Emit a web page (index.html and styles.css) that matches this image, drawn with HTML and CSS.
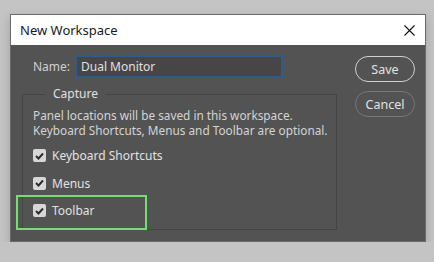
FILE: index.html
```html
<!DOCTYPE html>
<html lang="en">
<head>
    <meta charset="UTF-8">
    <title>New Workspace</title>
    <link rel="stylesheet" href="styles.css">
</head>
<body>
    <div class="dialog">
        <div class="title-bar">
            <span class="title">New Workspace</span>
            <svg class="close" width="11" height="11" viewBox="0 0 11 11">
                <path d="M0.5 0.5 L10.5 10.5 M10.5 0.5 L0.5 10.5" stroke="#111" stroke-width="1.1" fill="none"/>
            </svg>
        </div>
        <div class="dialog-body">
            <div class="main-col">
                <div class="name-row">
                    <label class="name-label" for="ws-name">Name:</label>
                    <input id="ws-name" class="name-input" type="text" value="Dual Monitor">
                </div>
                <fieldset class="capture">
                    <legend>Capture</legend>
                    <p class="hint">Panel locations will be saved in this workspace.<br>Keyboard Shortcuts, Menus and Toolbar are optional.</p>
                    <div class="check-row">
                        <span class="box"><svg width="9" height="8" viewBox="0 0 9 8"><path d="M1 4 L3.5 6.5 L8 1.5" stroke="#2b2b2b" stroke-width="1.9" fill="none"/></svg></span>
                        <span>Keyboard Shortcuts</span>
                    </div>
                    <div class="check-row">
                        <span class="box"><svg width="9" height="8" viewBox="0 0 9 8"><path d="M1 4 L3.5 6.5 L8 1.5" stroke="#2b2b2b" stroke-width="1.9" fill="none"/></svg></span>
                        <span>Menus</span>
                    </div>
                    <div class="check-row">
                        <span class="box"><svg width="9" height="8" viewBox="0 0 9 8"><path d="M1 4 L3.5 6.5 L8 1.5" stroke="#2b2b2b" stroke-width="1.9" fill="none"/></svg></span>
                        <span>Toolbar</span>
                    </div>
                </fieldset>
                <div class="highlight"></div>
            </div>
            <div class="side-col">
                <button class="btn btn-save">Save</button>
                <button class="btn btn-cancel">Cancel</button>
            </div>
        </div>
    </div>
</body>
</html>
```

FILE: styles.css
```css
body {
    margin: 0;
    background-color: #c4c4c4;
    font-family: "Noto Sans", "Open Sans", sans-serif;
    font-size: 12px;
    color: #d4d4d4;
}
.dialog {
    margin: 14px 0 0 10px;
    width: 414px;
    height: 226px;
    border: 1px solid #6a6a6a;
    background-color: #535353;
    box-shadow: 0 4px 10px rgba(0, 0, 0, 0.18);
}
.title-bar {
    height: 30px;
    background-color: #ffffff;
    display: flex;
    align-items: center;
    justify-content: space-between;
    padding: 0 10px 0 9px;
}
.title {
    font-size: 13px;
    color: #1a1a1a;
}
.dialog-body {
    display: flex;
    padding: 10px 0 0 11px;
}
.main-col {
    position: relative;
    width: 315px;
}
.name-row {
    display: flex;
    align-items: center;
    padding-left: 11px;
}
.name-label {
    width: 42px;
    color: #cfcfcf;
}
.name-input {
    width: 196px;
    height: 19px;
    margin: 0;
    padding: 0 4px;
    border: 2px solid #2f5a8c;
    background-color: #464646;
    color: #e0e0e0;
    font-family: inherit;
    font-size: 12px;
    outline: none;
}
.capture {
    margin: 8px 0 0 0;
    padding: 0 0 0 10px;
    height: 144px;
    border: 1px solid #444444;
    box-sizing: border-box;
}
.capture legend {
    margin-left: 12px;
    padding: 0 8px;
    line-height: 16px;
    color: #e0e0e0;
}
.hint {
    margin: 6px 0 4px 0;
    font-size: 11.8px;
    line-height: 15px;
    white-space: nowrap;
}
.check-row {
    display: flex;
    align-items: center;
    gap: 6px;
    height: 27.5px;
    color: #e2e2e2;
}
.box {
    width: 13px;
    height: 13px;
    border-radius: 2px;
    background-color: #d7d7d7;
    display: flex;
    align-items: center;
    justify-content: center;
}
.highlight {
    position: absolute;
    left: -6px;
    top: 140px;
    width: 127px;
    height: 31px;
    border: 2px solid #74de72;
    pointer-events: none;
}
.side-col {
    display: flex;
    flex-direction: column;
    gap: 9px;
    margin-left: 18px;
    padding-top: 1px;
}
.btn {
    width: 60px;
    height: 26px;
    border-radius: 13px;
    background-color: transparent;
    font-family: inherit;
    font-size: 12.5px;
    color: #e2e2e2;
    padding: 0;
}
.btn-save {
    border: 1.5px solid #cfcfcf;
}
.btn-cancel {
    border: 1.5px solid #777777;
}
```
